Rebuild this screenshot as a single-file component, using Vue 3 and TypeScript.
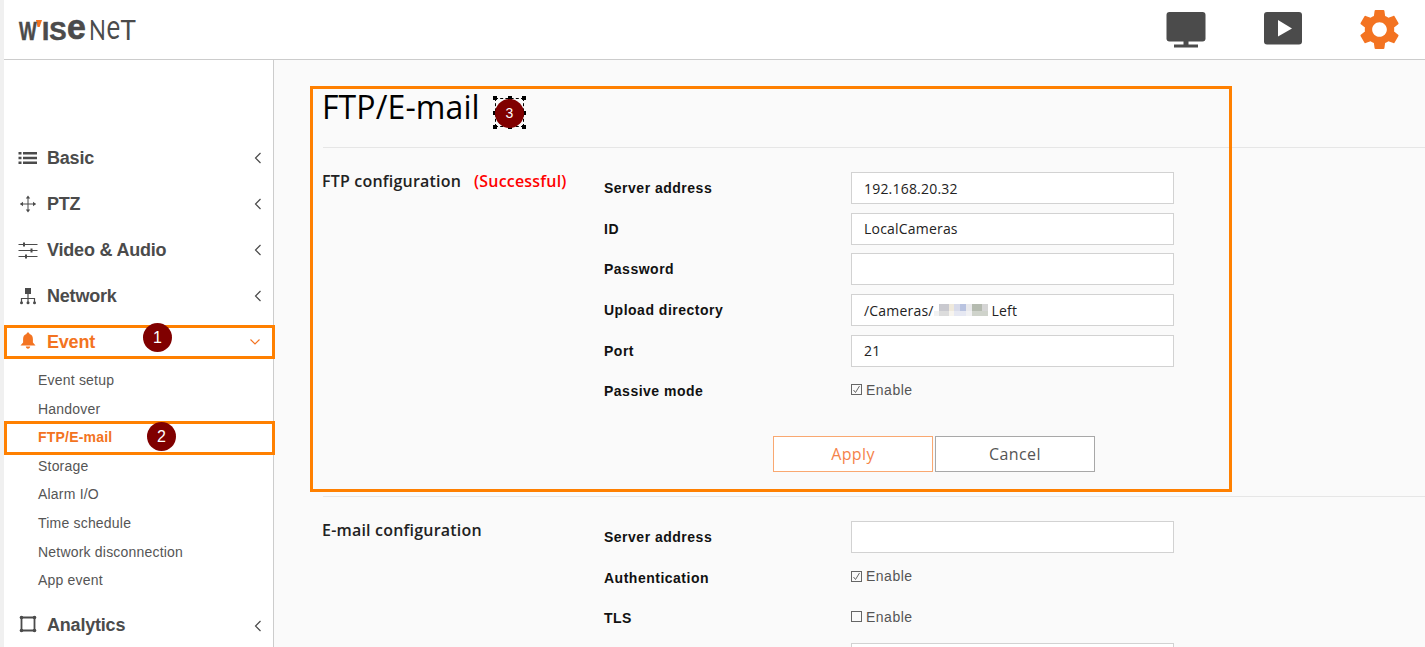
<script setup lang="ts">
interface Row { label: string; type: 'input' | 'check'; value?: string; checked?: boolean; blur?: boolean }
const navTop = [
  { name: 'Basic', icon: 'list' },
  { name: 'PTZ', icon: 'move' },
  { name: 'Video & Audio', icon: 'sliders' },
  { name: 'Network', icon: 'net' },
]
const subs = ['Event setup', 'Handover', 'FTP/E-mail', 'Storage', 'Alarm I/O', 'Time schedule', 'Network disconnection', 'App event']
const ftpRows: Row[] = [
  { label: 'Server address', type: 'input', value: '192.168.20.32' },
  { label: 'ID', type: 'input', value: 'LocalCameras' },
  { label: 'Password', type: 'input', value: '' },
  { label: 'Upload directory', type: 'input', value: '/Cameras/', blur: true },
  { label: 'Port', type: 'input', value: '21' },
  { label: 'Passive mode', type: 'check', checked: true },
]
const mailRows: Row[] = [
  { label: 'Server address', type: 'input', value: '' },
  { label: 'Authentication', type: 'check', checked: true },
  { label: 'TLS', type: 'check', checked: false },
  { label: '', type: 'input', value: '' },
]
const handles = [
  [0, 0], [15, 0], [29, 0], [0, 15], [29, 15], [0, 29], [15, 29], [29, 29],
]
</script>

<template>
  <div class="page">
    <header class="top">
      <div class="logo"><span class="tick"></span><b><span class="w">W</span>IS<span class="e1">e</span></b><span class="net"><span class="n">N</span><span class="e2">e</span>T</span></div>
      <div class="top-icons">
        <svg class="ic-mon" width="40" height="36" viewBox="0 0 40 36">
          <rect x="0.5" y="0" width="39" height="29.5" rx="3" fill="#4b4b4b" />
          <rect x="17.5" y="29" width="5" height="4" fill="#4b4b4b" />
          <rect x="8" y="32.5" width="24" height="3" fill="#4b4b4b" />
        </svg>
        <svg class="ic-play" width="40" height="33" viewBox="0 0 40 33">
          <rect x="1" y="0" width="38" height="32.5" rx="3" fill="#4b4b4b" />
          <path d="M15 8 L29 16.500 L15 24.500 Z" fill="#fff" />
        </svg>
        <svg class="ic-gear" width="49" height="49" viewBox="0 0 24 24">
          <path fill="#f37321" d="M19.14 12.94c.04-.3.06-.61.06-.94 0-.32-.02-.64-.07-.94l2.03-1.58c.18-.14.23-.41.12-.61l-1.92-3.32c-.12-.22-.37-.29-.59-.22l-2.39.96c-.5-.38-1.03-.7-1.62-.94l-.36-2.54c-.04-.24-.24-.41-.48-.41h-3.84c-.24 0-.43.17-.47.41l-.36 2.54c-.59.24-1.13.57-1.62.94l-2.39-.96c-.22-.08-.47 0-.59.22L2.74 8.87c-.12.21-.08.47.12.61l2.03 1.58c-.05.3-.09.63-.09.94s.02.64.07.94l-2.03 1.58c-.18.14-.23.41-.12.61l1.92 3.32c.12.22.37.29.59.22l2.39-.96c.5.38 1.03.7 1.62.94l.36 2.54c.05.24.24.41.48.41h3.84c.24 0 .44-.17.47-.41l.36-2.54c.59-.24 1.13-.56 1.62-.94l2.39.96c.22.08.47 0 .59-.22l1.92-3.32c.12-.22.07-.47-.12-.61l-2.01-1.58zM12 15.6c-1.98 0-3.6-1.62-3.6-3.6s1.62-3.6 3.6-3.6 3.6 1.62 3.6 3.6-1.62 3.6-3.6 3.6z" />
        </svg>
      </div>
    </header>

    <div class="body">
      <aside class="side">
        <div v-for="n in navTop" :key="n.name" class="nav">
          <svg class="nav-ic" width="20" height="20" viewBox="0 0 20 20" fill="none" stroke="#4b4b4b">
            <template v-if="n.icon === 'list'">
              <path d="M0.500 5.200h3M0.500 10h3M0.500 14.800h3" stroke-width="2.600" />
              <path d="M5 5.200h14M5 10h14M5 14.800h14" stroke-width="2.600" />
            </template>
            <template v-else-if="n.icon === 'move'">
              <path d="M10 3v14M2.500 10h15" stroke-width="1" />
              <path d="M10 1.500 7.800 4.500h4.400zM10 18.500l-2.200-3h4.400zM2 10l3-2.200v4.400zM18 10l-3-2.200v4.400z" fill="#4b4b4b" stroke="none" />
            </template>
            <template v-else-if="n.icon === 'sliders'">
              <path d="M0.500 4.500h19M0.500 10.500h19M0.500 16.500h19" stroke-width="1" />
              <path d="M6 2.500v4M13.500 8.500v4M8 14.500v4" stroke-width="2" />
            </template>
            <template v-else>
              <rect x="7" y="2" width="6" height="6" fill="#4b4b4b" stroke="none" />
              <path d="M10 8v9M3.500 17v-4.500h13V17" stroke-width="1.200" />
              <circle cx="3.500" cy="16.800" r="1.500" fill="#4b4b4b" stroke="none" />
              <circle cx="10" cy="16.800" r="1.500" fill="#4b4b4b" stroke="none" />
              <circle cx="16.500" cy="16.800" r="1.500" fill="#4b4b4b" stroke="none" />
            </template>
          </svg>
          <span class="nav-t">{{ n.name }}</span>
          <svg class="chev" width="8" height="12" viewBox="0 0 8 12" fill="none" stroke="#4b4b4b" stroke-width="1.200"><path d="M6.500 1 1.500 6l5 5" /></svg>
        </div>

        <div class="nav active">
          <svg class="nav-ic bell" width="20" height="20" viewBox="0 0 20 20" fill="#f37321">
            <path d="M10 1.500c-.9 0-1.500.6-1.500 1.500-2.400.7-3.400 2.600-3.400 5v3.500L2.500 14.600h15l-2.600-3.100V8c0-2.400-1-4.300-3.400-5 0-.9-.6-1.500-1.500-1.500z" />
            <path d="M7.800 15.600h4.400c0 1.200-1 2.200-2.200 2.200s-2.200-1-2.200-2.200z" />
          </svg>
          <span class="nav-t">Event</span>
          <svg class="chev down" width="12" height="8" viewBox="0 0 12 8" fill="none" stroke="#f37321" stroke-width="1.100"><path d="M1.500 1.500 6 6l4.500-4.500" /></svg>
        </div>

        <ul class="subs">
          <li v-for="s in subs" :key="s" :class="{ on: s === 'FTP/E-mail' }">{{ s }}</li>
        </ul>

        <div class="nav analytics">
          <svg class="nav-ic ana" width="20" height="20" viewBox="0 0 20 20" fill="#4b4b4b" stroke="#4b4b4b">
            <path d="M3.500 3.500h13v13h-13z" fill="none" stroke-width="1.800" />
            <circle cx="3.500" cy="3.500" r="1.800" stroke="none" /><circle cx="16.500" cy="3.500" r="1.800" stroke="none" />
            <circle cx="3.500" cy="16.500" r="1.800" stroke="none" /><circle cx="16.500" cy="16.500" r="1.800" stroke="none" />
          </svg>
          <span class="nav-t">Analytics</span>
          <svg class="chev" width="8" height="12" viewBox="0 0 8 12" fill="none" stroke="#4b4b4b" stroke-width="1.200"><path d="M6.500 1 1.500 6l5 5" /></svg>
        </div>
      </aside>

      <main class="main">
        <h1 class="title">FTP/E-mail</h1>

        <section class="sec">
          <div class="sec-h"><span>FTP configuration</span><span class="ok">(Successful)</span></div>
          <div class="sec-b">
            <div v-for="r in ftpRows" :key="r.label" class="row">
              <label class="lab">{{ r.label }}</label>
              <div v-if="r.type === 'input'" class="inp">{{ r.value }}<template v-if="r.blur"><span class="blurred"></span> Left</template></div>
              <div v-else class="chk"><span class="box"><svg v-if="r.checked" width="9" height="9" viewBox="0 0 9 9" fill="none" stroke="#666" stroke-width="1"><path d="M1.500 5 3.500 7.500 7.500 1" /></svg></span>Enable</div>
            </div>
            <div class="actions">
              <button class="btn apply" type="button">Apply</button>
              <button class="btn cancel" type="button">Cancel</button>
            </div>
          </div>
        </section>

        <section class="sec last">
          <div class="sec-h"><span>E-mail configuration</span></div>
          <div class="sec-b">
            <div v-for="(r, i) in mailRows" :key="i" class="row">
              <label class="lab">{{ r.label }}</label>
              <div v-if="r.type === 'input'" class="inp">{{ r.value }}</div>
              <div v-else class="chk"><span class="box"><svg v-if="r.checked" width="9" height="9" viewBox="0 0 9 9" fill="none" stroke="#666" stroke-width="1"><path d="M1.500 5 3.500 7.500 7.500 1" /></svg></span>Enable</div>
            </div>
          </div>
        </section>
      </main>
    </div>

    <div class="mark m1"></div>
    <div class="mark m2"></div>
    <div class="mark m3"></div>
    <div class="dot d1">1</div>
    <div class="dot d2">2</div>
    <div class="sel">
      <span class="dash"></span>
      <span v-for="(h, i) in handles" :key="i" class="hd" :style="{ left: h[0] + 'px', top: h[1] + 'px' }"></span>
    </div>
    <div class="dot d3">3</div>
  </div>
</template>

<style>
html, body { margin: 0; height: 100%; overflow: hidden; background: #f0f0f0; }
</style>

<style scoped>
.page { position: relative; height: 647px; padding-left: 4px; box-sizing: border-box; background: #f0f0f0; overflow: hidden; display: flex; flex-direction: column; font-family: "Liberation Sans", Arial, sans-serif; }
.top { height: 59px; flex: none; background: #fff; border-bottom: 1px solid #ccc; display: flex; align-items: center; justify-content: space-between; padding: 0 21.5px 0 15px; }
.logo { position: relative; display: flex; align-items: baseline; font-family: "Liberation Sans", sans-serif; font-size: 26px; line-height: 26px; color: #4b4b4b; margin-top: 2px; }
.logo b { font-weight: 700; display: flex; font-family: "Liberation Sans", sans-serif; -webkit-text-stroke: 0.5px #4b4b4b; }
.logo .w { display: inline-block; width: 23px; transform: scaleX(0.72); transform-origin: 0 100%; }
.logo .e1 { display: inline-block; width: 20px; transform: scale(1.3, 1.36); transform-origin: 0 100%; }
.logo .net { font-family: Lato, sans-serif; font-weight: 400; display: flex; margin-left: 2px; }
.logo .n { display: inline-block; width: 18px; transform: scaleX(0.85); transform-origin: 0 100%; }
.logo .e2 { display: inline-block; width: 14px; transform: scaleY(1.36); transform-origin: 0 100%; }
.tick { position: absolute; left: 17px; top: 3px; width: 6px; height: 7px; background: #f37321; clip-path: polygon(0 0, 100% 0, 60% 100%, 25% 100%); }
.top-icons { display: flex; align-items: center; }
.ic-mon { margin-top: 1px; margin-right: 57px; }
.ic-play { margin-top: -3px; margin-right: 52px; }
.body { flex: 1; display: flex; min-height: 0; }
.side { width: 269px; flex: none; background: #fff; border-right: 1px solid #ccc; padding-top: 75px; }
.nav { height: 46px; display: flex; align-items: center; padding: 0 11px 0 14px; box-sizing: border-box; color: #4b4b4b; }
.nav-ic { flex: none; margin-right: 9px; }
.bell { margin-top: -3px; }
.ana { margin-top: -4px; }
.nav-t { flex: 1; font-size: 18px; font-weight: 700; letter-spacing: -0.2px; }
.chev { flex: none; }
.active { color: #f37321; }
.chev.down { margin-right: 1px; }
.subs { list-style: none; margin: 0; padding: 1px 0 0 34px; font-size: 14px; color: #555; letter-spacing: 0.2px; }
.subs li { height: 28.6px; line-height: 28.6px; }
.subs li.on { color: #f37321; font-weight: 700; }
.analytics { margin-top: 8px; }
.main { flex: 1; min-width: 0; background: #fafafa; padding-left: 49px; overflow: hidden; }
.title { margin: 0; height: 88px; box-sizing: border-box; padding-top: 24px; border-bottom: 1px solid #e6e6e6; font-family: "Open Sans", sans-serif; font-size: 32px; line-height: 46px; font-weight: 400; color: #000; text-indent: -1px; letter-spacing: 0.1px; }
.sec { display: flex; border-bottom: 1px solid #e6e6e6; padding-bottom: 24px; }
.sec.last { border-bottom: 0; }
.sec-h { width: 281px; flex: none; padding-top: 22px; font-family: "Open Sans", sans-serif; font-size: 16px; line-height: 22px; font-weight: 600; color: #222; display: flex; gap: 13px; align-items: flex-start; letter-spacing: 0.2px; margin-left: -1px; margin-right: 1px; }
.ok { color: #f00; font-weight: 600; }
.sec-b { padding-top: 20px; flex: 1; }
.row { height: 40.6px; display: flex; align-items: center; }
.lab { width: 247px; flex: none; font-size: 14px; font-weight: 700; color: #111; letter-spacing: 0.5px; }
.inp { width: 323px; height: 32px; box-sizing: border-box; background: #fff; border: 1px solid #d2d2d2; padding: 0 12px; display: flex; align-items: center; white-space: pre; font-family: "Open Sans", sans-serif; font-size: 14px; letter-spacing: 0.2px; color: #222; }
.blurred { display: inline-block; width: 54px; height: 12px; background:
  linear-gradient(90deg, #fff 0 5px, #c9c9cf 5px 15px, #efe9dc 15px 20px, #d8dbea 20px 26px, #b9c3e0 26px 32px, #e9e9ec 32px 38px, #b5bbb0 38px 48px, #d5d5d5 48px 54px) 0 0 / 100% 7px no-repeat,
  linear-gradient(90deg, #f2f2f2 0 5px, #dcdcdc 5px 15px, #f7f4ee 15px 20px, #e6e8f2 20px 32px, #f1f1f3 32px 38px, #cfd3cb 38px 54px) 0 100% / 100% 5px no-repeat; }
.chk { display: flex; align-items: center; font-size: 14px; letter-spacing: 0.5px; color: #555; margin-top: -3px; }
.box { width: 9px; height: 9px; border: 1px solid #666; margin-right: 4px; display: flex; align-items: center; justify-content: center; background: #fafafa; }
.actions { display: flex; gap: 2px; margin-top: 24.4px; padding-left: 169px; }
.btn { width: 160px; height: 36px; box-sizing: border-box; background: #fff; font-family: "Open Sans", sans-serif; font-size: 16px; letter-spacing: 0.4px; padding: 0; cursor: pointer; }
.apply { border: 1px solid #f9a871; color: #f5834a; }
.cancel { border: 1px solid #a8a8a8; color: #555; }
.mark { position: absolute; box-sizing: border-box; border: 3px solid #ff8000; pointer-events: none; }
.m1 { left: 4px; top: 325px; width: 271px; height: 34px; }
.m2 { left: 4px; top: 421px; width: 271px; height: 34px; }
.m3 { left: 310px; top: 86px; width: 922px; height: 406px; }
.dot { position: absolute; width: 29px; height: 29px; border-radius: 50%; background: #800000; color: #fff; font-size: 16px; line-height: 29px; text-align: center; }
.d1 { left: 143px; top: 323px; }
.d2 { left: 147px; top: 422px; }
.d3 { left: 495px; top: 99px; font-size: 14px; }
.sel { position: absolute; left: 493px; top: 96px; width: 33px; height: 33px; }
.dash { position: absolute; inset: 2px; border: 1px dashed #000; }
.hd { position: absolute; width: 4px; height: 4px; background: #000; }
</style>
